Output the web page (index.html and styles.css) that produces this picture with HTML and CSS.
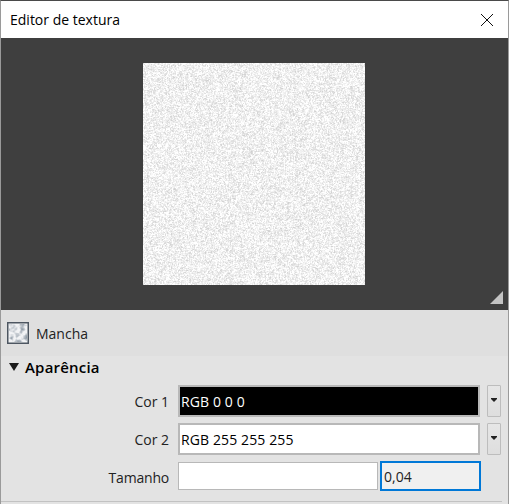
FILE: index.html
```html
<!DOCTYPE html>
<html lang="pt">
<head>
<meta charset="utf-8">
<title>Editor de textura</title>
<link rel="stylesheet" href="styles.css">
</head>
<body>
<div class="window">
  <header class="titlebar">
    <span class="title">Editor de textura</span>
    <svg class="close" width="14" height="14" viewBox="0 0 14 14"><path d="M1 1 L13 13 M13 1 L1 13" stroke="#111" stroke-width="1" fill="none"/></svg>
  </header>
  <section class="preview">
    <canvas class="texture" id="texture" width="222" height="222"></canvas>
    <svg class="grip" width="13" height="13" viewBox="0 0 13 13"><path d="M13 0 V13 H0 Z" fill="#c4c4c4"/></svg>
  </section>
  <div class="typebar">
    <svg class="swatch" width="22" height="22" viewBox="0 0 22 22">
      <defs>
        <filter id="blotch" x="0" y="0" width="100%" height="100%" color-interpolation-filters="sRGB">
          <feTurbulence type="fractalNoise" baseFrequency="0.22" numOctaves="2" seed="4"/>
          <feColorMatrix type="matrix" values="0 0 0 0 0.5  0 0 0 0 0.55  0 0 0 0 0.6  1.9 0 0 0 -0.75"/>
        </filter>
      </defs>
      <rect x="0.75" y="0.75" width="20.5" height="20.5" fill="#f2f3f5" stroke="#4d5661" stroke-width="1.5"/>
      <rect x="2" y="2" width="18" height="18" filter="url(#blotch)"/>
    </svg>
    <span class="type-name">Mancha</span>
  </div>
  <section class="panel">
    <h2 class="section-head"><span class="arrow"></span>Aparência</h2>
    <div class="form">
      <label class="label">Cor 1</label>
      <div class="field field-black">RGB 0 0 0</div>
      <button class="drop"><span class="drop-arrow"></span></button>
      <label class="label">Cor 2</label>
      <div class="field">RGB 255 255 255</div>
      <button class="drop"><span class="drop-arrow"></span></button>
      <label class="label label-size">Tamanho</label>
      <div class="size-pair">
        <div class="input-plain"></div>
        <div class="input-focus">0,04</div>
      </div>
    </div>
    <div class="rule"></div>
  </section>
</div>
<script src="texture.js"></script>
</body>
</html>
```
FILE: styles.css
```css
* { box-sizing: border-box; }
html, body { margin: 0; padding: 0; }
body { width: 509px; height: 504px; overflow: hidden; font-family: "Open Sans", "Noto Sans", "Liberation Sans", sans-serif; }
.window { width: 509px; height: 504px; display: flex; flex-direction: column; border-top: 1px solid #4a4a4a; border-left: 1px solid #9a9a9a; border-right: 1px solid #9a9a9a; background: #e3e3e3; color: #111; overflow: hidden; }
.titlebar { height: 37px; flex: none; background: #fff; display: flex; align-items: center; justify-content: space-between; padding: 0 14px 0 9px; }
.title { font-size: 14px; color: #000; }
.close { display: block; }
.preview { position: relative; height: 272px; flex: none; background: #3f3f3f; padding: 25px 0 0 142px; }
.texture { display: block; }
.grip { position: absolute; right: 5px; bottom: 6px; display: block; }
.typebar { height: 46px; flex: none; background: #dfdfdf; display: flex; align-items: center; gap: 7px; padding: 0 0 0 6px; }
.type-name { font-size: 14px; color: #222; }
.panel { flex: 1; background: #e3e3e3; }
.section-head { margin: 0; height: 22px; display: flex; align-items: center; gap: 6px; padding-left: 8px; font-size: 15px; font-weight: 600; letter-spacing: 0.2px; color: #000; }
.arrow { width: 0; height: 0; border-left: 5.5px solid transparent; border-right: 5.5px solid transparent; border-top: 8px solid #1a1a1a; }
.form { display: grid; column-gap: 0; grid-template-columns: 168px 9px 302px 7px 14px; row-gap: 6px; grid-template-rows: 32px 32px 30px; margin-top: 7px; }
.label { grid-column: 1; align-self: center; text-align: right; font-size: 14px; color: #222; }
.label-size { padding-top: 2px; letter-spacing: -0.2px; }
.field { grid-column: 3; border: 2px solid #b8b8b8; background: #fff; padding: 0 0 0 1px; font-size: 14px; letter-spacing: 0.12px; color: #000; display: flex; align-items: center; }
.field-black { background: #000; color: #fff; }
.drop { grid-column: 5; padding: 0 0 2px; border: 1px solid #bdbdbd; border-radius: 1px; background: linear-gradient(#e6e6e6, #dedede); display: flex; align-items: center; justify-content: center; }
.drop-arrow { width: 0; height: 0; border-left: 3px solid transparent; border-right: 3px solid transparent; border-top: 3px solid #222; box-shadow: 0 -1px 0 0 #222; }
.size-pair { grid-column: 3 / 6; display: flex; align-items: center; gap: 2px; }
.input-plain { width: 200px; height: 28px; background: #fff; border: 1px solid #b8b8b8; }
.input-focus { width: 101px; height: 30px; background: #f0f0f0; border: 2px solid #0078d7; padding-left: 2px; font-size: 14px; color: #222; display: flex; align-items: center; }
.rule { height: 1px; margin: 10px 6px 0 0; background: #c2c2c2; }
```
FILE: texture.js
```js
(function () {
  var canvas = document.getElementById('texture');
  var ctx = canvas.getContext('2d');
  var size = canvas.width;
  var seed = 12345;
  function rand() {
    seed = (seed * 1664525 + 1013904223) >>> 0;
    return seed / 4294967296;
  }
  var n = new Float32Array(size * size);
  for (var i = 0; i < n.length; i++) n[i] = rand() + rand() - 1;
  function at(x, y) {
    return n[((y + size) % size) * size + ((x + size) % size)];
  }
  var image = ctx.createImageData(size, size);
  for (var y = 0; y < size; y++) {
    for (var x = 0; x < size; x++) {
      var near = (at(x - 1, y) + at(x + 1, y) + at(x, y - 1) + at(x, y + 1)) / 4;
      var v = 240 + 30 * at(x, y) + 10 * near;
      v = Math.min(255, v);
      var p = (y * size + x) * 4;
      image.data[p] = image.data[p + 1] = image.data[p + 2] = v;
      image.data[p + 3] = 255;
    }
  }
  ctx.putImageData(image, 0, 0);
})();
```
